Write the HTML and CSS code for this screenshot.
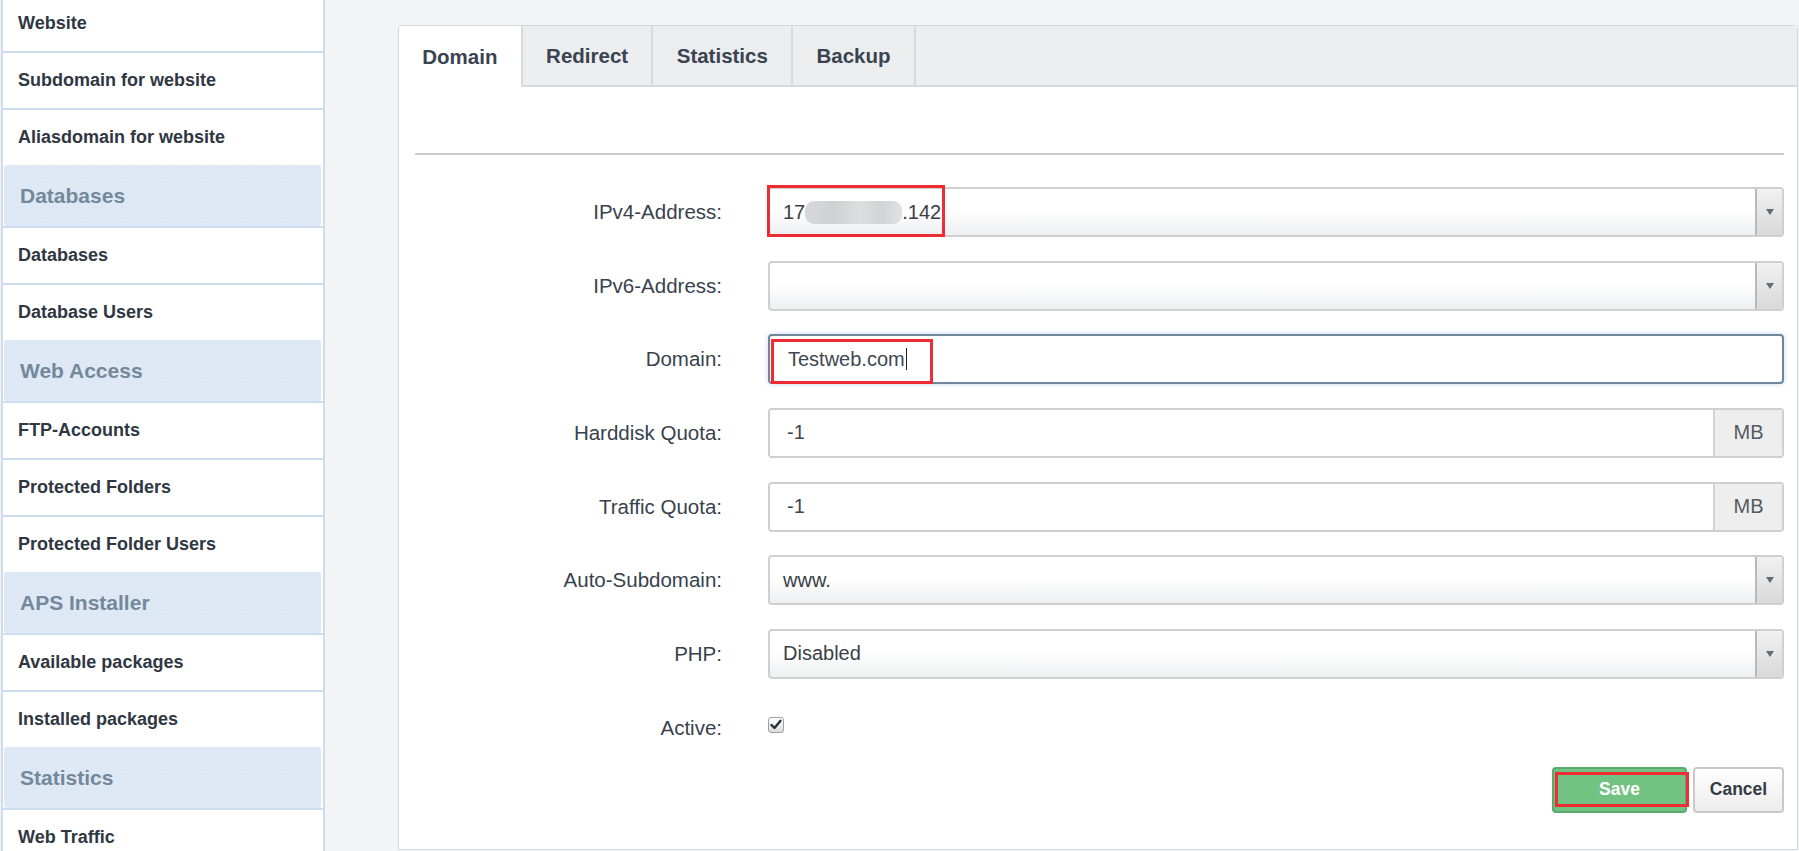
FILE: index.html
```html
<!DOCTYPE html>
<html lang="en">
<head>
  <meta charset="UTF-8" />
  <meta name="viewport" content="width=device-width, initial-scale=1.0"/>
  <title>Website - Domain</title>
  <link rel="stylesheet" href="styles.css">
</head>
<body>

  <div class="sidebar">
    <ul class="nav">
      <li class="nav-item first">Website</li>
      <li class="nav-item">Subdomain for website</li>
      <li class="nav-item">Aliasdomain for website</li>
      <li class="nav-head">Databases</li>
      <li class="nav-item">Databases</li>
      <li class="nav-item">Database Users</li>
      <li class="nav-head">Web Access</li>
      <li class="nav-item">FTP-Accounts</li>
      <li class="nav-item">Protected Folders</li>
      <li class="nav-item">Protected Folder Users</li>
      <li class="nav-head">APS Installer</li>
      <li class="nav-item">Available packages</li>
      <li class="nav-item">Installed packages</li>
      <li class="nav-head">Statistics</li>
      <li class="nav-item">Web Traffic</li>
    </ul>
  </div>

  <div class="main">
    <div class="panel">
      <div class="tabs">
        <div class="tab active">Domain</div>
        <div class="tab">Redirect</div>
        <div class="tab">Statistics</div>
        <div class="tab">Backup</div>
      </div>

      <div class="panel-body">
        <div class="legend-line"></div>

        <div class="rows">
          <div class="row">
            <label>IPv4-Address:</label>
            <div class="field">
              <div class="select">
                <span class="value">17<span class="blur"></span>.142</span>
                <span class="arrow"></span>
              </div>
              <div class="mark mark-ip"></div>
            </div>
          </div>

          <div class="row">
            <label>IPv6-Address:</label>
            <div class="field">
              <div class="select">
                <span class="value"></span>
                <span class="arrow"></span>
              </div>
            </div>
          </div>

          <div class="row">
            <label>Domain:</label>
            <div class="field">
              <div class="text focused">Testweb.com<span class="caret"></span></div>
              <div class="mark mark-domain"></div>
            </div>
          </div>

          <div class="row">
            <label>Harddisk Quota:</label>
            <div class="field">
              <div class="group">
                <input type="text" value="-1">
                <span class="addon">MB</span>
              </div>
            </div>
          </div>

          <div class="row">
            <label>Traffic Quota:</label>
            <div class="field">
              <div class="group">
                <input type="text" value="-1">
                <span class="addon">MB</span>
              </div>
            </div>
          </div>

          <div class="row">
            <label>Auto-Subdomain:</label>
            <div class="field">
              <div class="select">
                <span class="value">www.</span>
                <span class="arrow"></span>
              </div>
            </div>
          </div>

          <div class="row">
            <label>PHP:</label>
            <div class="field">
              <div class="select">
                <span class="value">Disabled</span>
                <span class="arrow"></span>
              </div>
            </div>
          </div>

          <div class="row">
            <label>Active:</label>
            <div class="field">
              <span class="check">
                <svg width="12" height="11" viewBox="0 0 12 11"><path d="M1.5 6 L4.5 9 L10.5 1.8" fill="none" stroke="#2b2f34" stroke-width="2.4" stroke-linecap="round" stroke-linejoin="round"/></svg>
              </span>
            </div>
          </div>
        </div>

        <div class="buttons">
          <div class="btn-wrap">
            <button class="btn save">Save</button>
            <div class="mark mark-save"></div>
          </div>
          <button class="btn cancel">Cancel</button>
        </div>
      </div>
    </div>
  </div>

</body>
</html>
```

FILE: styles.css
```css
body {
  margin: 0;
  height: 851px;
  overflow: hidden;
  display: flex;
  font-family: "Liberation Sans", Arial, sans-serif;
  background-color: #f3f4f6;
}

/* sidebar */
.sidebar {
  width: 320px;
  flex-shrink: 0;
  margin-left: 1px;
  background-color: #fff;
  border-left: 2px solid #cddcee;
  border-right: 2px solid #cddcee;
  overflow: hidden;
}
.nav {
  list-style: none;
  margin: -4px 0 0 0;
  padding: 0;
}
.nav-item {
  height: 55px;
  border-top: 2px solid #cddcee;
  padding-left: 15px;
  display: flex;
  align-items: center;
  font-size: 18px;
  font-weight: bold;
  color: #2f3742;
}
.nav-item.first {
  border-top: none;
}
.nav-head {
  height: 61px;
  margin: 0 2px 0 1px;
  padding-left: 16px;
  display: flex;
  align-items: center;
  border-radius: 3px;
  background-color: #dfe9f5;
  background-image: radial-gradient(#d8e3f0 0.6px, transparent 0.8px);
  background-size: 5px 5px;
  font-size: 21px;
  font-weight: bold;
  color: #74889b;
}

/* main panel */
.main {
  flex: 1;
  padding: 25px 1px 0 73px;
}
.panel {
  background-color: #fff;
  border: 1px solid #d5d8db;
  border-radius: 4px 4px 0 0;
}
.tabs {
  display: flex;
  height: 59px;
  border-bottom: 2px solid #d6dadd;
  background-color: #edeef0;
  background-image: radial-gradient(#e6e8ea 0.6px, transparent 0.8px);
  background-size: 4px 4px;
  border-radius: 4px 0 0 0;
}
.tab {
  padding: 0 23.3px;
  display: flex;
  align-items: center;
  font-size: 20.5px;
  font-weight: bold;
  color: #3a4350;
  border-right: 2px solid #d8dbde;
}
.tab.active {
  background: #fff;
  height: 61px;
  border-radius: 4px 0 0 0;
}

.panel-body {
  padding: 0 13px 36px 16px;
}
.legend-line {
  margin-top: 66px;
  height: 2px;
  background-color: #cccccc;
}

.rows {
  margin-top: 32px;
  display: flex;
  flex-direction: column;
  gap: 23.67px;
}
.row {
  display: grid;
  grid-template-columns: 307px 1fr;
  column-gap: 46px;
  height: 50px;
  align-items: center;
}
.row label {
  text-align: right;
  font-size: 20.5px;
  color: #38424d;
}
.field {
  position: relative;
  height: 50px;
  display: flex;
  align-items: center;
}

.select {
  box-sizing: border-box;
  width: 100%;
  height: 50px;
  display: flex;
  align-items: center;
  border: 2px solid #d0d0d0;
  border-radius: 4px;
  background: linear-gradient(#ffffff 0%, #ffffff 45%, #eeeff1 100%);
  font-size: 20px;
  color: #3a3f45;
}
.select .value {
  padding-left: 13px;
  display: flex;
  align-items: center;
}
.select .arrow {
  margin-left: auto;
  width: 25px;
  height: 100%;
  border-left: 2px solid #b9b9b9;
  border-radius: 0 3px 3px 0;
  background: linear-gradient(#f1f1f1, #d9d9d9);
  display: flex;
  align-items: center;
  justify-content: center;
}
.select .arrow::after {
  content: "";
  border-left: 4px solid transparent;
  border-right: 4px solid transparent;
  border-top: 6px solid #5b6b7a;
}
.blur {
  display: inline-block;
  width: 97px;
  height: 23px;
  border-radius: 9px;
  background: linear-gradient(90deg, #d6d8da 0%, #cfd1d3 30%, #dcdedf 55%, #d1d3d5 80%, #dfe1e2 100%);
}

.text {
  box-sizing: border-box;
  width: 100%;
  height: 50px;
  display: flex;
  align-items: center;
  padding-left: 18px;
  border: 2px solid #cfcfcf;
  border-radius: 4px;
  font-size: 20px;
  color: #3f4750;
}
.text.focused {
  border-color: #6f869b;
  box-shadow: 0 0 5px rgba(120, 170, 220, 0.45);
}
.caret {
  display: inline-block;
  width: 1px;
  height: 22px;
  margin-left: 1px;
  background-color: #222;
}

.group {
  box-sizing: border-box;
  width: 100%;
  height: 50px;
  display: flex;
  border: 2px solid #cfcfcf;
  border-radius: 4px;
  overflow: hidden;
}
.group input {
  flex: 1;
  border: none;
  outline: none;
  padding: 0 0 0 17px;
  font-family: inherit;
  font-size: 20px;
  color: #3f4750;
  background: #fff;
}
.addon {
  width: 67px;
  border-left: 2px solid #d3d3d3;
  background-color: #eeeeee;
  display: flex;
  align-items: center;
  justify-content: center;
  font-size: 20px;
  color: #555b61;
}

.check {
  box-sizing: border-box;
  width: 16px;
  height: 16px;
  margin-top: -6px;
  border: 1px solid #9ea2a6;
  border-radius: 3px;
  background: linear-gradient(#ffffff, #d9dadc);
  display: flex;
  align-items: center;
  justify-content: center;
}

/* buttons */
.buttons {
  margin-top: 14px;
  display: flex;
  justify-content: flex-end;
  gap: 6px;
}
.btn-wrap {
  position: relative;
}
.btn {
  height: 46px;
  border-radius: 4px;
  font-family: inherit;
  font-size: 17.5px;
  font-weight: bold;
  cursor: pointer;
}
.save {
  width: 135px;
  color: #fff;
  background-color: #72c283;
  border: 2px solid #5aab6b;
}
.cancel {
  width: 91px;
  color: #333b45;
  background: linear-gradient(#ffffff, #ececec);
  border: 2px solid #c9c9c9;
}

/* red annotation boxes */
.mark {
  position: absolute;
  box-sizing: border-box;
  border: 3px solid #ee2c33;
  pointer-events: none;
}
.mark-ip {
  left: -1px;
  top: -2px;
  width: 178px;
  height: 52px;
}
.mark-domain {
  left: 3px;
  top: 5px;
  width: 162px;
  height: 45px;
}
.mark-save {
  left: 3px;
  top: 5px;
  width: 134px;
  height: 35px;
}
```
